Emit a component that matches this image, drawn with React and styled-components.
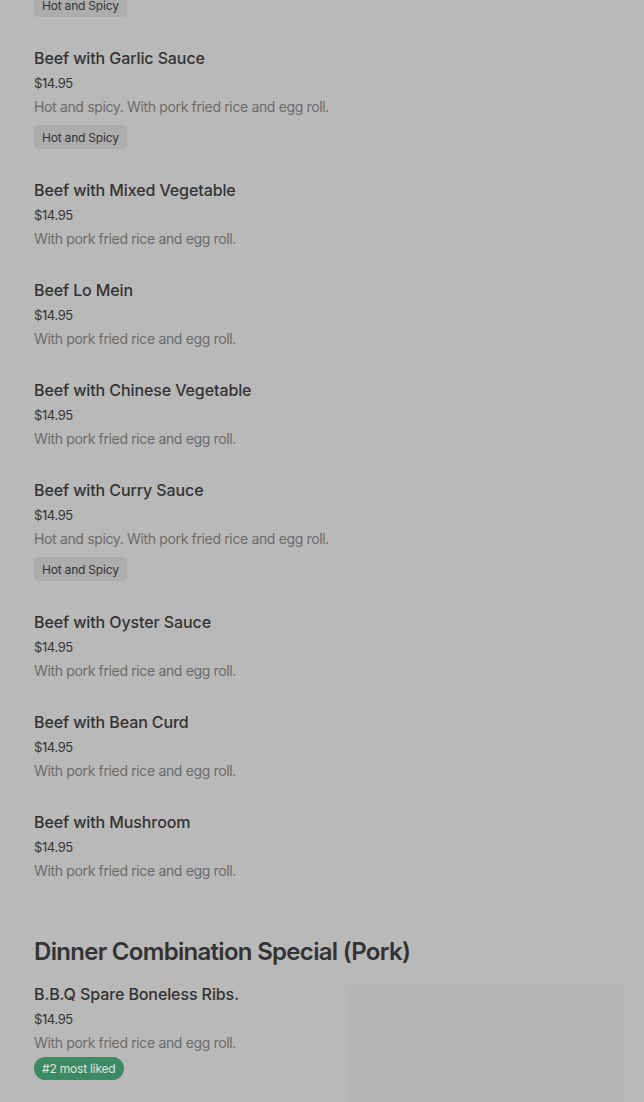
import styled, { createGlobalStyle } from 'styled-components';

const GlobalStyle = createGlobalStyle`
  html, body {
    margin: 0;
    padding: 0;
    background: #b9b9b9;
    overflow: hidden;
  }
  body {
    font-family: Inter, Roboto, "Liberation Sans", sans-serif;
  }
`;

const beef = [
  { name: 'Beef with Garlic Sauce', desc: 'Hot and spicy. With pork fried rice and egg roll.', tag: 'Hot and Spicy' },
  { name: 'Beef with Mixed Vegetable', desc: 'With pork fried rice and egg roll.' },
  { name: 'Beef Lo Mein', desc: 'With pork fried rice and egg roll.' },
  { name: 'Beef with Chinese Vegetable', desc: 'With pork fried rice and egg roll.' },
  { name: 'Beef with Curry Sauce', desc: 'Hot and spicy. With pork fried rice and egg roll.', tag: 'Hot and Spicy' },
  { name: 'Beef with Oyster Sauce', desc: 'With pork fried rice and egg roll.' },
  { name: 'Beef with Bean Curd', desc: 'With pork fried rice and egg roll.' },
  { name: 'Beef with Mushroom', desc: 'With pork fried rice and egg roll.' },
];

const App = () => {
  return (
    <>
      <GlobalStyle />
      <Page>
        <List>
          <TagRow $first>
            <Tag>Hot and Spicy</Tag>
          </TagRow>
          {beef.map((item) => (
            <Item key={item.name}>
              <Title>{item.name}</Title>
              <Price>$14.95</Price>
              <Desc>{item.desc}</Desc>
              {item.tag && (
                <TagRow>
                  <Tag>{item.tag}</Tag>
                </TagRow>
              )}
            </Item>
          ))}
        </List>

        <Section>
          <Heading>Dinner Combination Special (Pork)</Heading>
          <FeatureRow>
            <Item>
              <Title>B.B.Q Spare Boneless Ribs.</Title>
              <Price>$14.95</Price>
              <Desc>With pork fried rice and egg roll.</Desc>
              <Badge>#2 most liked</Badge>
            </Item>
            <Photo />
          </FeatureRow>
        </Section>
      </Page>
    </>
  );
};

const Page = styled.div`
  padding: 0 20px 0 34px;
  display: flex;
  flex-direction: column;
`;

const List = styled.div`
  display: flex;
  flex-direction: column;
  gap: 27px;
`;

const Item = styled.div`
  display: flex;
  flex-direction: column;
  align-items: flex-start;
`;

const Title = styled.div`
  font-size: 16px;
  font-weight: 500;
  line-height: 24px;
  letter-spacing: -0.1px;
  color: #333333;
`;

const Price = styled.div`
  margin-top: 1px;
  font-size: 13px;
  line-height: 24px;
  color: #363636;
  letter-spacing: -0.4px;
`;

const Desc = styled.div`
  font-size: 14px;
  line-height: 24px;
  color: #6b6b6b;
  letter-spacing: -0.35px;
`;

const TagRow = styled.div`
  display: flex;
  margin: ${(p) => (p.$first ? '-7px 0 2px' : '6px 0 2px')};
`;

const Tag = styled.span`
  display: inline-flex;
  align-items: center;
  height: 24px;
  padding: 0 8px;
  border-radius: 4px;
  background: #adadad;
  color: #333333;
  font-size: 12px;
  letter-spacing: -0.2px;
`;

const Section = styled.section`
  margin-top: 53px;
  display: flex;
  flex-direction: column;
  gap: 14px;
`;

const Heading = styled.h2`
  margin: 0;
  font-family: Inter, "Liberation Sans", sans-serif;
  font-size: 24px;
  font-weight: 600;
  line-height: 32px;
  letter-spacing: -0.7px;
  color: #333333;
`;

const FeatureRow = styled.div`
  display: grid;
  grid-template-columns: 1fr 280px;
  gap: 30px;
  align-items: start;
`;

const Badge = styled.span`
  margin-top: 2px;
  display: inline-flex;
  align-items: center;
  height: 23px;
  padding: 0 8px;
  border-radius: 12px;
  background: #3c8a62;
  color: #e3e3e3;
  font-size: 12px;
  letter-spacing: -0.2px;
`;

const Photo = styled.div`
  height: 180px;
  background: #b5b5b5;
  border-radius: 4px;
  box-shadow: inset 4px 4px 0 #b7b7b7;
`;

export default App;
